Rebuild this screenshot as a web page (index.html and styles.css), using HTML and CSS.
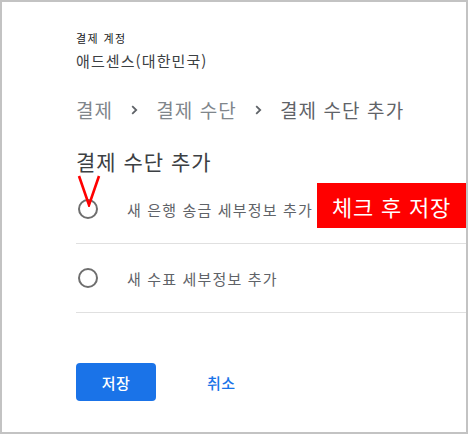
FILE: index.html
```html
<!DOCTYPE html>
<html lang="ko">
<head>
<meta charset="utf-8">
<link rel="stylesheet" href="styles.css">
</head>
<body>
<div class="frame">
  <div class="content">
    <div class="label">결제 계정</div>
    <div class="account">애드센스(대한민국)</div>
    <nav class="breadcrumb">
      <span class="crumb">결제</span>
      <svg class="chev" width="7" height="10" viewBox="0 0 7 10"><path d="M1.2 1.2 L5.2 5 L1.2 8.8" fill="none" stroke="#5f6368" stroke-width="1.8"/></svg>
      <span class="crumb">결제 수단</span>
      <svg class="chev" width="7" height="10" viewBox="0 0 7 10"><path d="M1.2 1.2 L5.2 5 L1.2 8.8" fill="none" stroke="#5f6368" stroke-width="1.8"/></svg>
      <span class="crumb current">결제 수단 추가</span>
    </nav>
    <h1 class="heading">결제 수단 추가</h1>
    <div class="options">
      <label class="option">
        <span class="radio"></span>
        <span class="option-text">새 은행 송금 세부정보 추가</span>
      </label>
      <label class="option">
        <span class="radio"></span>
        <span class="option-text">새 수표 세부정보 추가</span>
      </label>
    </div>
    <div class="actions">
      <button class="btn-primary">저장</button>
      <a class="btn-text">취소</a>
    </div>
  </div>
  <svg class="check-mark" width="26" height="32" viewBox="0 0 26 32"><path d="M2 1 L12 30 L22 1" fill="none" stroke="#ff0000" stroke-width="2.6"/></svg>
  <div class="note">체크 후 저장</div>
</div>
</body>
</html>
```

FILE: styles.css
```css
html, body {
  margin: 0;
  padding: 0;
  background: #ffffff;
}
body {
  font-family: "Noto Sans CJK KR", "Noto Sans", sans-serif;
}
.frame {
  position: relative;
  width: 468px;
  height: 434px;
  box-sizing: border-box;
  border: 2px solid #c3c3c3;
  background: #fff;
  overflow: hidden;
}
.content {
  padding: 28px 0 0 74px;
}
.label {
  font-size: 11px;
  line-height: 16px;
  letter-spacing: 1.4px;
  color: #202124;
}
.account {
  margin-top: 5px;
  font-size: 15px;
  line-height: 20px;
  letter-spacing: 1.1px;
  color: #3c4043;
}
.breadcrumb {
  margin-top: 27px;
  display: flex;
  align-items: center;
  gap: 18px;
  font-size: 19px;
  line-height: 24px;
  letter-spacing: 1.1px;
  color: #80868b;
}
.crumb.current {
  color: #5f6368;
}
.chev {
  display: block;
}
.heading {
  margin: 25px 0 0 0;
  font-size: 21px;
  font-weight: 400;
  line-height: 28px;
  letter-spacing: 1px;
  color: #3c4043;
}
.options {
  display: flex;
  flex-direction: column;
}
.option {
  display: flex;
  align-items: center;
  height: 68px;
  border-bottom: 1px solid #e0e0e0;
}
.radio {
  width: 20px;
  height: 20px;
  box-sizing: border-box;
  border: 2px solid #6e6e6e;
  border-radius: 50%;
  margin-left: 2px;
  flex: none;
}
.option-text {
  margin-left: 29px;
  font-size: 15px;
  letter-spacing: 1.15px;
  color: #5f6368;
}
.actions {
  margin-top: 50px;
  display: flex;
  align-items: center;
}
.btn-primary {
  width: 80px;
  height: 38px;
  border: none;
  border-radius: 4px;
  background: #1a73e8;
  color: #fff;
  font-family: inherit;
  font-size: 15px;
  font-weight: 500;
  letter-spacing: 0.5px;
  padding: 0;
}
.btn-text {
  margin-left: 51px;
  font-size: 15px;
  font-weight: 500;
  letter-spacing: 0.5px;
  color: #1a73e8;
}
.check-mark {
  position: absolute;
  left: 75px;
  top: 173px;
}
.note {
  position: absolute;
  left: 315px;
  top: 181px;
  width: 149px;
  height: 45px;
  background: #ff0000;
  color: #fff;
  font-size: 22px;
  letter-spacing: 0.8px;
  display: flex;
  align-items: center;
  justify-content: center;
}
```
